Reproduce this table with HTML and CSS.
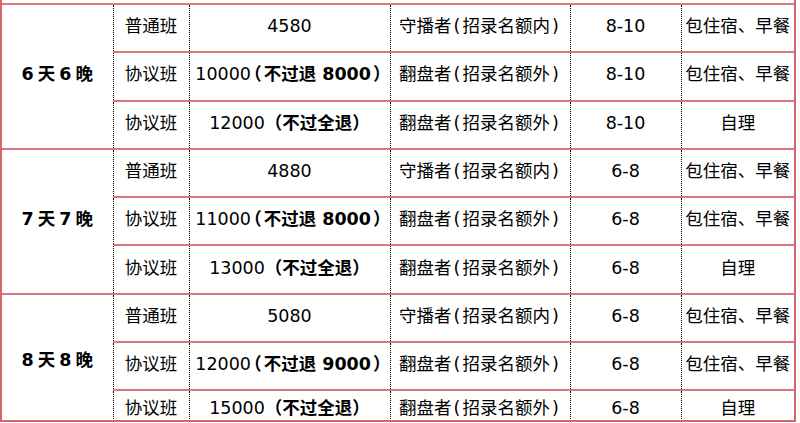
FILE: index.html
```html
<!DOCTYPE html>
<html lang="zh-CN">
<head>
<meta charset="utf-8">
<title>价格表</title>
<link rel="stylesheet" href="styles.css">
</head>
<body>
<div class="frame">
<table class="price">
<colgroup>
<col class="c-days"><col class="c-type"><col class="c-fee"><col class="c-role"><col class="c-num"><col class="c-stay">
</colgroup>
<tbody>
<tr>
<td class="days" rowspan="3">6天6晚</td>
<td>普通班</td>
<td class="num">4580</td>
<td>守播者<span class="p">(</span>招录名额内<span class="p">)</span></td>
<td class="num">8-10</td>
<td>包住宿、早餐</td>
</tr>
<tr>
<td>协议班</td>
<td class="num">10000<b><span class="bp">（</span>不过退 8000<span class="bp">）</span></b></td>
<td>翻盘者<span class="p">(</span>招录名额外<span class="p">)</span></td>
<td class="num">8-10</td>
<td>包住宿、早餐</td>
</tr>
<tr>
<td>协议班</td>
<td class="num">12000<b>（不过全退）</b></td>
<td>翻盘者<span class="p">(</span>招录名额外<span class="p">)</span></td>
<td class="num">8-10</td>
<td>自理</td>
</tr>
<tr>
<td class="days" rowspan="3">7天7晚</td>
<td>普通班</td>
<td class="num">4880</td>
<td>守播者<span class="p">(</span>招录名额内<span class="p">)</span></td>
<td class="num">6-8</td>
<td>包住宿、早餐</td>
</tr>
<tr>
<td>协议班</td>
<td class="num">11000<b><span class="bp">（</span>不过退 8000<span class="bp">）</span></b></td>
<td>翻盘者<span class="p">(</span>招录名额外<span class="p">)</span></td>
<td class="num">6-8</td>
<td>包住宿、早餐</td>
</tr>
<tr>
<td>协议班</td>
<td class="num">13000<b>（不过全退）</b></td>
<td>翻盘者<span class="p">(</span>招录名额外<span class="p">)</span></td>
<td class="num">6-8</td>
<td>自理</td>
</tr>
<tr>
<td class="days" rowspan="3">8天8晚</td>
<td>普通班</td>
<td class="num">5080</td>
<td>守播者<span class="p">(</span>招录名额内<span class="p">)</span></td>
<td class="num">6-8</td>
<td>包住宿、早餐</td>
</tr>
<tr>
<td>协议班</td>
<td class="num">12000<b><span class="bp">（</span>不过退 9000<span class="bp">）</span></b></td>
<td>翻盘者<span class="p">(</span>招录名额外<span class="p">)</span></td>
<td class="num">6-8</td>
<td>包住宿、早餐</td>
</tr>
<tr class="last">
<td>协议班</td>
<td class="num">15000<b>（不过全退）</b></td>
<td>翻盘者<span class="p">(</span>招录名额外<span class="p">)</span></td>
<td class="num">6-8</td>
<td>自理</td>
</tr>
</tbody>
</table>
</div>
</body>
</html>
```

FILE: styles.css
```css
html, body {
  margin: 0;
  padding: 0;
  background: #ffffff;
}

.frame {
  box-sizing: border-box;
  width: 796px;
  height: 422px;
  padding-top: 3px;
  overflow: hidden;
  border-left: 2px solid #d4646b;
  border-right: 2px solid #d4646b;
  border-bottom: 2px solid #d4646b;
}

.price {
  width: 792px;
  table-layout: fixed;
  border-collapse: collapse;
  font-family: "DejaVu Sans", "Noto Sans CJK SC", sans-serif;
  font-size: 17.5px;
  color: #000;
}

.c-days { width: 111px; }
.c-type { width: 76px; }
.c-fee { width: 201px; }
.c-role { width: 180px; }
.c-num { width: 111px; }
.c-stay { width: 113px; }

.price tr {
  height: 48.3px;
}

.price tr.last {
  height: 40px;
}

.price td {
  padding: 0 0 3px 0;
  text-align: center;
  vertical-align: middle;
  white-space: nowrap;
  border-top: 2px solid #d9787d;
  border-bottom: 2px solid #d9787d;
  border-left: 1px dotted #000;
  border-right: 1px dotted #000;
  line-height: 1.2;
}

.price td.days {
  border-left: none;
  font-weight: bold;
  letter-spacing: 4px;
  text-indent: 4px;
}

.price td:last-child {
  border-right: none;
}

.price b {
  font-weight: bold;
}

.p {
  display: inline-block;
  width: 11px;
  text-align: center;
}

.bp {
  font-feature-settings: "halt" 1;
  padding: 0 2px;
}
```
